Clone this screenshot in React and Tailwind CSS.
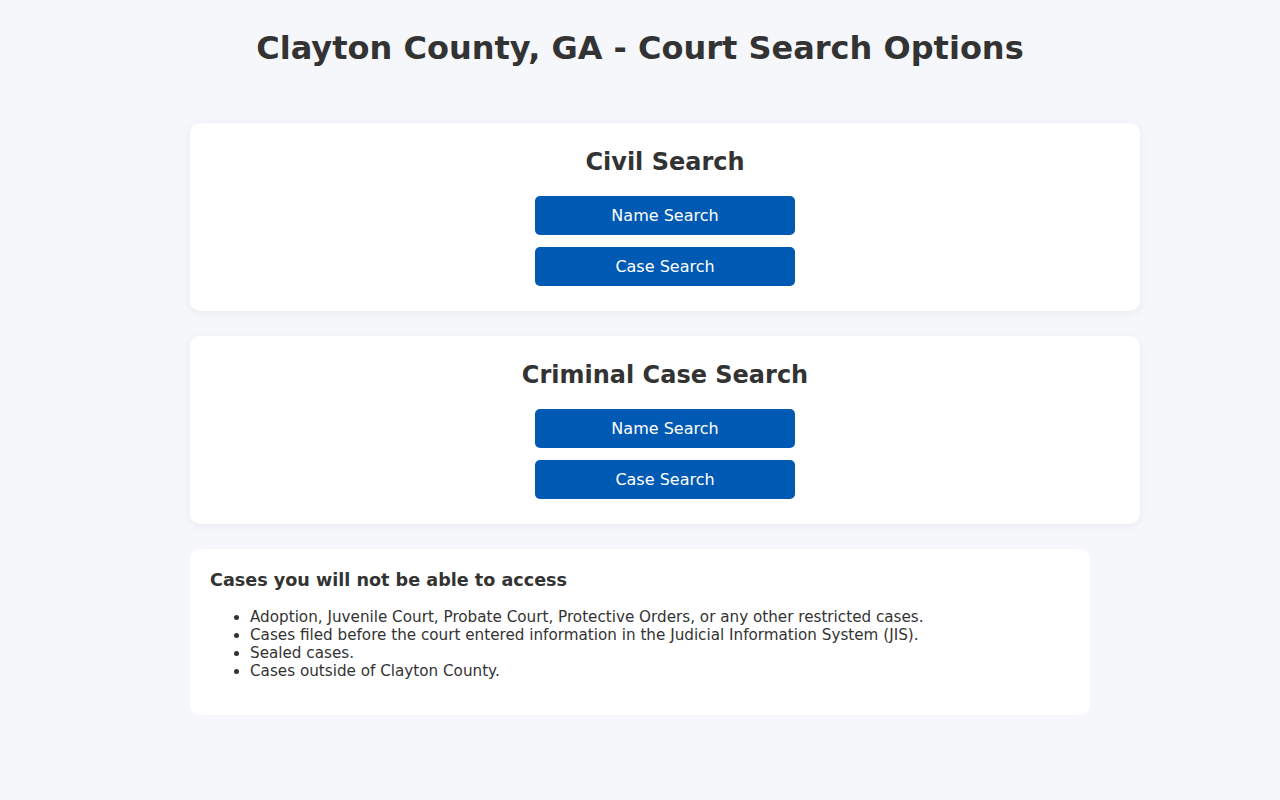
export default function App() {
  const Btn = ({ children }) => (
    <button className="w-[260px] h-[39px] rounded-[5px] bg-[#0059b3] text-white text-[16px]">{children}</button>
  );
  const Card = ({ title }) => (
    <div className="w-[950px] bg-white rounded-[10px] shadow-[0_2px_8px_rgba(0,0,0,0.06)] pt-[25px] pb-[25px] flex flex-col items-center">
      <h2 className="text-[24px] font-bold leading-[28px] text-[#333]">{title}</h2>
      <div className="mt-[20px] flex flex-col gap-[12px]">
        <Btn>Name Search</Btn>
        <Btn>Case Search</Btn>
      </div>
    </div>
  );
  return (
    <div className="min-h-[800px] bg-[#f5f7fa] text-[#333] flex flex-col items-center pt-[30px]" style={{ fontFamily: '"DejaVu Sans", sans-serif' }}>
      <h1 className="text-[32px] font-bold leading-[37px] text-[#333]">Clayton County, GA - Court Search Options</h1>
      <div className="mt-[56px] flex flex-col gap-[25px] w-[900px]">
        <Card title="Civil Search" />
        <Card title="Criminal Case Search" />
        <div className="w-[900px] bg-white rounded-[10px] px-[20px] pt-[21px] pb-[35px]">
          <h3 className="text-[17.6px] font-bold leading-[21px]">Cases you will not be able to access</h3>
          <ul className="mt-[17px] list-disc pl-[40px] text-[15.2px] leading-[18px]">
            <li>Adoption, Juvenile Court, Probate Court, Protective Orders, or any other restricted cases.</li>
            <li>Cases filed before the court entered information in the Judicial Information System (JIS).</li>
            <li>Sealed cases.</li>
            <li>Cases outside of Clayton County.</li>
          </ul>
        </div>
      </div>
    </div>
  );
}
